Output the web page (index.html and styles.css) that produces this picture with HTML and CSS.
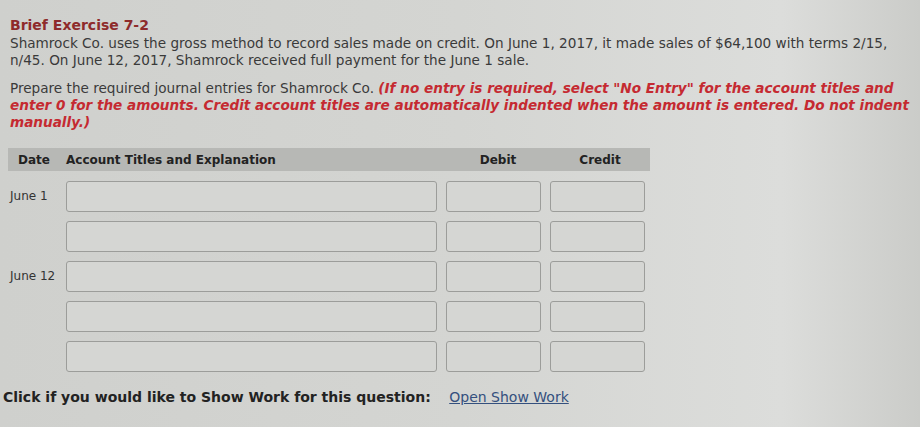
FILE: index.html
```html
<!DOCTYPE html>
<html lang="en">
<head>
  <meta charset="UTF-8">
  <title>Brief Exercise 7-2</title>
  <link rel="stylesheet" href="styles.css">
</head>
<body>
  <div class="question">
    <h2 class="title">Brief Exercise 7-2</h2>
    <p class="text">Shamrock Co. uses the gross method to record sales made on credit. On June 1, 2017, it made sales of $64,100 with terms 2/15, n/45. On June 12, 2017, Shamrock received full payment for the June 1 sale.</p>
    <p class="text">Prepare the required journal entries for Shamrock Co. <em class="note">(If no entry is required, select "No Entry" for the account titles and enter 0 for the amounts. Credit account titles are automatically indented when the amount is entered. Do not indent manually.)</em></p>

    <div class="journal">
      <div class="jhead">
        <span class="c-date">Date</span>
        <span class="c-acct">Account Titles and Explanation</span>
        <span class="c-num">Debit</span>
        <span class="c-num">Credit</span>
      </div>
      <div class="jrow">
        <span class="c-date">June 1</span>
        <input class="inp acct" type="text">
        <input class="inp num" type="text">
        <input class="inp num" type="text">
      </div>
      <div class="jrow">
        <span class="c-date"></span>
        <input class="inp acct" type="text">
        <input class="inp num" type="text">
        <input class="inp num" type="text">
      </div>
      <div class="jrow">
        <span class="c-date">June 12</span>
        <input class="inp acct" type="text">
        <input class="inp num" type="text">
        <input class="inp num" type="text">
      </div>
      <div class="jrow">
        <span class="c-date"></span>
        <input class="inp acct" type="text">
        <input class="inp num" type="text">
        <input class="inp num" type="text">
      </div>
      <div class="jrow">
        <span class="c-date"></span>
        <input class="inp acct" type="text">
        <input class="inp num" type="text">
        <input class="inp num" type="text">
      </div>
    </div>

    <div class="showwork">
      <b>Click if you would like to Show Work for this question:</b>
      <a href="#" class="swlink">Open Show Work</a>
    </div>
  </div>
</body>
</html>
```

FILE: styles.css
```css
body {
  margin: 0;
  background: linear-gradient(90deg, #cfd0cd 0%, #d4d5d2 50%, #dcdddb 85%, #cbccc9 100%);
  font-family: "DejaVu Sans", Verdana, sans-serif;
  color: #3a3a3a;
  height: 427px;
  overflow: hidden;
}
.question {
  padding: 16px 0 0 10px;
  width: 900px;
}
.title {
  margin: 0 0 1px;
  font-size: 14px;
  line-height: 18px;
  font-weight: bold;
  color: #8e2b2b;
}
.text {
  margin: 0 0 11px;
  font-size: 13.6px;
  line-height: 17px;
}
.note {
  font-weight: bold;
  color: #c52a31;
}
.journal {
  margin: 17px 0 0 -2px;
  width: 642px;
}
.jhead, .jrow {
  display: grid;
  grid-template-columns: 58px 380px 104px 100px;
  align-items: center;
}
.jhead {
  height: 23px;
  background: #b7b8b5;
  font-size: 12px;
  font-weight: bold;
  color: #222;
}
.jhead .c-date {
  padding-left: 10px;
}
.jhead .c-num {
  text-align: center;
}
.jrow {
  height: 40px;
}
.jhead + .jrow {
  margin-top: 5px;
}
.jrow .c-date {
  font-size: 12px;
  padding-left: 2px;
  color: #333;
}
.inp {
  height: 31px;
  box-sizing: border-box;
  border: 1px solid #9c9d9a;
  border-radius: 3px;
  background: #d5d6d3;
}
.acct {
  width: 371px;
}
.num {
  width: 95px;
}
.showwork {
  margin: 13px 0 0 -7px;
  font-size: 14px;
  color: #222;
}
.swlink {
  margin-left: 14px;
  color: #34507e;
}
```
